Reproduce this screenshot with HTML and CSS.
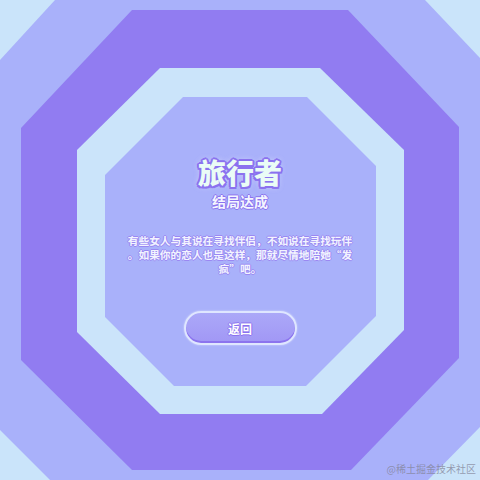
FILE: index.html
```html
<!DOCTYPE html>
<html lang="zh-CN">
<head>
<meta charset="utf-8">
<title>旅行者 · 结局达成</title>
<link rel="stylesheet" href="styles.css">
</head>
<body>
<div class="scene">
  <svg class="backdrop" viewBox="0 0 480 480" aria-hidden="true">
    <polygon class="ring-soft" points="55,0 425,0 480,58 480,427 428,480 50,480 0,430 0,60"/>
    <polygon class="ring-deep" points="132,10 348,10 459,127 459,358 351,470 132,470 21,360 21,128"/>
    <polygon class="ring-pale" points="160,68 320,68 404,150 404,330 322,414 160,414 77,332 77,150"/>
    <polygon class="ring-soft" points="183,97 307,97 376,166 376,316 306,386 174,386 105,317 105,175"/>
  </svg>

  <main class="ending">
    <h1 class="ending-title">旅行者</h1>
    <p class="ending-subtitle">结局达成</p>
    <p class="ending-story">有些女人与其说在寻找伴侣，不如说在寻找玩伴。如果你的恋人也是这样，那就尽情地陪她“发疯”吧。</p>
    <button class="back-button" type="button">返回</button>
  </main>

  <span class="watermark">@稀土掘金技术社区</span>
</div>
</body>
</html>
```

FILE: styles.css
```css
html, body {
  margin: 0;
  padding: 0;
}

body {
  font-family: "Noto Sans CJK SC", "Noto Sans", sans-serif;
}

.scene {
  position: relative;
  width: 480px;
  height: 480px;
  overflow: hidden;
  background: #cae4fa;
}

/* concentric octagon rings behind the card */
.backdrop {
  position: absolute;
  inset: 0;
  width: 480px;
  height: 480px;
}

.ring-soft { fill: #a9b1fa; }
.ring-deep { fill: #917cf1; }
.ring-pale { fill: #cbe4fa; }

.ending {
  position: relative;
  display: flex;
  flex-direction: column;
  align-items: center;
  padding-top: 157px;
}

.ending-title {
  margin: 0;
  font-size: 28px;
  line-height: 30px;
  font-weight: 900;
  letter-spacing: 0;
  color: #eafcf6;
  text-shadow:
    2px 0 0 #8b72ef, -2px 0 0 #8b72ef, 0 2px 0 #8b72ef, 0 -2px 0 #8b72ef,
    1.5px 1.5px 0 #8b72ef, -1.5px 1.5px 0 #8b72ef, 1.5px -1.5px 0 #8b72ef, -1.5px -1.5px 0 #8b72ef,
    0 0 6px rgba(240, 240, 255, 0.7);
}

.ending-subtitle {
  margin: 6px 0 0;
  font-size: 14px;
  line-height: 16px;
  font-weight: 700;
  color: #f4f6ff;
  text-shadow:
    1px 0 0 #8b72ef, -1px 0 0 #8b72ef, 0 1px 0 #8b72ef, 0 -1px 0 #8b72ef;
}

.ending-story {
  margin: 25px 0 0;
  width: 232px;
  font-size: 10.7px;
  line-height: 14px;
  font-weight: 700;
  text-align: center;
  line-break: anywhere;
  color: #f2f4ff;
  text-shadow:
    1px 0 0 #9a88f2, -1px 0 0 #9a88f2, 0 1px 0 #9a88f2, 0 -1px 0 #9a88f2;
}

.back-button {
  margin-top: 35px;
  width: 113px;
  height: 34px;
  border: 2px solid #dfe6ff;
  border-radius: 17px;
  background: linear-gradient(180deg, #aba8f8 0%, #a197f5 100%);
  box-shadow: inset 0 -2px 0 #8c74ee, 0 0 2px rgba(255, 255, 255, 0.6);
  font-family: inherit;
  font-size: 12px;
  font-weight: 700;
  color: #ffffff;
  text-shadow:
    1px 0 0 #8b72ef, -1px 0 0 #8b72ef, 0 1px 0 #8b72ef, 0 -1px 0 #8b72ef;
  padding: 0;
  cursor: pointer;
}

.watermark {
  position: absolute;
  right: 4px;
  bottom: 4px;
  font-size: 10px;
  line-height: 14px;
  color: rgba(130, 130, 150, 0.75);
  font-family: "Noto Sans CJK SC", sans-serif;
}
```
